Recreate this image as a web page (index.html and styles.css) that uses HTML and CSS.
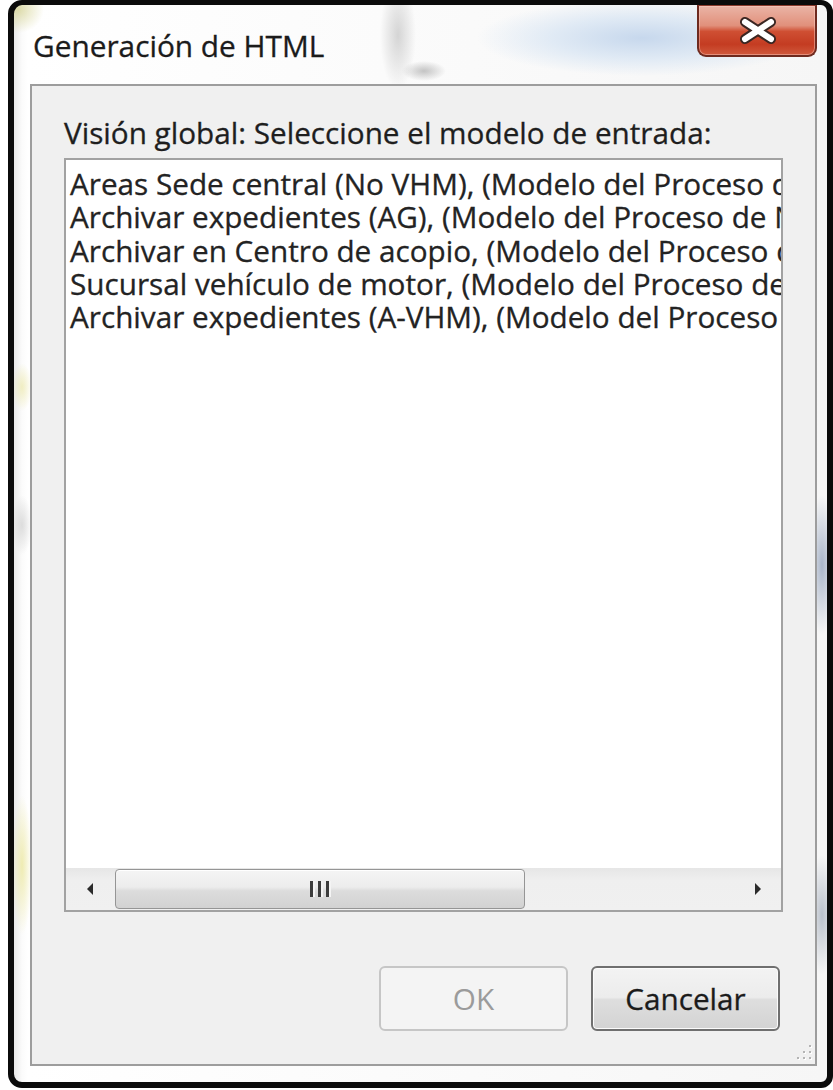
FILE: index.html
```html
<!DOCTYPE html>
<html lang="es">
<head>
<meta charset="utf-8">
<title>Generación de HTML</title>
<link rel="stylesheet" href="styles.css">
</head>
<body>
<div class="window">
  <div class="titlebar">
    <h1 class="title">Generación de HTML</h1>
    <button class="close" type="button" aria-label="Cerrar">
      <svg class="close-x" width="120" height="52" viewBox="0 0 120 52" aria-hidden="true">
        <path d="M48 17 L74 34 M74 17 L48 34" stroke="#3a2622" stroke-width="10" stroke-linecap="round" fill="none"/>
        <path d="M48 17 L74 34 M74 17 L48 34" stroke="#ffffff" stroke-width="6" stroke-linecap="round" fill="none"/>
      </svg>
    </button>
  </div>

  <div class="panel">
    <label class="prompt" for="models">Visión global: Seleccione el modelo de entrada:</label>
    <div class="listbox" id="models">
      <ul class="items">
        <li>Areas Sede central (No VHM), (Modelo del Proceso de Negocio)</li>
        <li>Archivar expedientes (AG), (Modelo del Proceso de Negocio)</li>
        <li>Archivar en Centro de acopio, (Modelo del Proceso de Negocio)</li>
        <li>Sucursal vehículo de motor, (Modelo del Proceso de Negocio)</li>
        <li>Archivar expedientes (A-VHM), (Modelo del Proceso de Negocio)</li>
      </ul>
      <div class="hscroll">
        <span class="arrow">
          <svg width="10" height="16" viewBox="0 0 10 16"><path d="M8 2 L2 8 L8 14 Z" fill="#2b2b2b"/></svg>
        </span>
        <div class="track">
          <div class="thumb">
            <svg class="grip" width="22" height="18" viewBox="0 0 22 18">
              <rect x="1" y="1" width="3" height="16" fill="#3c3c3c"/>
              <rect x="4" y="1" width="2" height="16" fill="#f4f4f4"/>
              <rect x="9" y="1" width="3" height="16" fill="#3c3c3c"/>
              <rect x="12" y="1" width="2" height="16" fill="#f4f4f4"/>
              <rect x="17" y="1" width="3" height="16" fill="#3c3c3c"/>
              <rect x="20" y="1" width="2" height="16" fill="#f4f4f4"/>
            </svg>
          </div>
        </div>
        <span class="arrow">
          <svg width="10" height="16" viewBox="0 0 10 16"><path d="M2 2 L8 8 L2 14 Z" fill="#2b2b2b"/></svg>
        </span>
      </div>
    </div>

    <div class="actions">
      <button class="btn" type="button" disabled>OK</button>
      <button class="btn btn-default" type="button">Cancelar</button>
    </div>

    <svg class="sizegrip" width="18" height="18" viewBox="0 0 18 18" aria-hidden="true">
      <g fill="#ffffff">
        <rect x="15" y="3" width="2" height="2"/>
        <rect x="15" y="9" width="2" height="2"/>
        <rect x="9" y="9" width="2" height="2"/>
        <rect x="15" y="15" width="2" height="2"/>
        <rect x="9" y="15" width="2" height="2"/>
        <rect x="3" y="15" width="2" height="2"/>
      </g>
      <g fill="#b4b4b4">
        <rect x="14" y="2" width="2" height="2"/>
        <rect x="14" y="8" width="2" height="2"/>
        <rect x="8" y="8" width="2" height="2"/>
        <rect x="14" y="14" width="2" height="2"/>
        <rect x="8" y="14" width="2" height="2"/>
        <rect x="2" y="14" width="2" height="2"/>
      </g>
    </svg>
  </div>
</div>
</body>
</html>
```

FILE: styles.css
```css
html, body {
  margin: 0;
  padding: 0;
  background: #ffffff;
  overflow: hidden;
}

body {
  width: 833px;
  height: 1090px;
  font-family: "Open Sans", "Noto Sans", "Liberation Sans", sans-serif;
}

/* Window frame: dark outline around a pale glass border */
.window {
  box-sizing: border-box;
  margin-left: 8px;
  width: 825px;
  height: 1088px;
  border: 6px solid #0b0b0b;
  border-top-width: 5px;
  border-radius: 14px 12px 12px 14px;
  display: flex;
  flex-direction: column;
  background:
    radial-gradient(ellipse 165px 38px at 628px 33px, rgba(196, 214, 236, 0.95), rgba(214, 228, 243, 0.7) 55%, rgba(255, 255, 255, 0) 100%),
    radial-gradient(ellipse 18px 55px at 384px 30px, rgba(196, 196, 196, 0.7), rgba(255, 255, 255, 0) 100%),
    radial-gradient(ellipse 22px 10px at 410px 66px, rgba(150, 150, 150, 0.55), rgba(255, 255, 255, 0) 100%),
    radial-gradient(ellipse 14px 70px at 808px 560px, rgba(150, 165, 190, 0.8), rgba(255, 255, 255, 0) 100%),
    radial-gradient(ellipse 14px 60px at 808px 910px, rgba(160, 170, 185, 0.7), rgba(255, 255, 255, 0) 100%),
    radial-gradient(ellipse 10px 70px at 8px 860px, rgba(236, 232, 160, 0.8), rgba(255, 255, 255, 0) 100%),
    radial-gradient(ellipse 10px 24px at 8px 382px, rgba(236, 232, 170, 0.7), rgba(255, 255, 255, 0) 100%),
    radial-gradient(ellipse 10px 30px at 8px 520px, rgba(200, 200, 200, 0.6), rgba(255, 255, 255, 0) 100%),
    radial-gradient(ellipse 26px 24px at 4px 4px, rgba(214, 212, 150, 0.8), rgba(255, 255, 255, 0) 100%),
    linear-gradient(90deg, #e9e9e9 0, #fbfbfb 8px, #ffffff 14px, #f6f6f6 100%);
}

.titlebar {
  height: 79px;
  flex: none;
  display: flex;
  justify-content: space-between;
  align-items: flex-start;
}

.title {
  margin: 21px 0 0 19px;
  font-size: 29.8px;
  line-height: 40px;
  font-weight: 400;
  color: #1b1b1b;
  -webkit-text-stroke: 0.3px #1b1b1b;
  text-shadow: 0 0 6px rgba(255, 255, 255, 0.9);
}

/* Red caption close button */
.close {
  position: relative;
  box-sizing: border-box;
  width: 120px;
  height: 52px;
  margin: 0 10px 0 0;
  padding: 0;
  border: 2px solid #6e2a1f;
  border-top: 1px solid #8a3a2c;
  border-radius: 0 0 9px 9px;
  background: linear-gradient(180deg, #eab4a6 0%, #e1907b 40%, #cf4f33 52%, #c43c22 78%, #d0593d 100%);
  box-shadow: inset 0 0 0 1px rgba(255, 210, 200, 0.45);
  cursor: default;
}

.close-x {
  position: absolute;
  left: -2px;
  top: -1px;
}

/* Client area */
.panel {
  position: relative;
  flex: 1;
  box-sizing: border-box;
  margin: 0 10px 16px 16px;
  border: 2px solid #9d9d9d;
  background: #f0f0f0;
  padding: 27px 32px 33px 32px;
  display: flex;
  flex-direction: column;
  color: #1e1e1e;
  font-size: 29.7px;
}

.prompt {
  display: block;
  line-height: 40px;
  margin-bottom: 5px;
  -webkit-text-stroke: 0.3px #1e1e1e;
}

.listbox {
  box-sizing: border-box;
  height: 754px;
  border: 2px solid #a2a2a2;
  background: #ffffff;
  display: flex;
  flex-direction: column;
  overflow: hidden;
}

.items {
  flex: 1;
  list-style: none;
  margin: 0;
  padding: 7px 0 0 4px;
  overflow: hidden;
}

.items li {
  white-space: nowrap;
  line-height: 33.3px;
  height: 33.3px;
  color: #232323;
  -webkit-text-stroke: 0.3px #232323;
}

/* Horizontal scroll bar */
.hscroll {
  height: 42px;
  flex: none;
  display: flex;
  background: linear-gradient(180deg, #e6e6e6 0%, #efefef 30%, #f0f0f0 100%);
}

.arrow {
  width: 47px;
  flex: none;
  display: flex;
  align-items: center;
  justify-content: center;
}

.track {
  flex: 1;
  padding: 1px 0;
  display: flex;
}

.thumb {
  box-sizing: border-box;
  width: 66%;
  margin-left: 2px;
  border: 1px solid #959595;
  border-radius: 4px;
  background: linear-gradient(180deg, #f5f5f5 0%, #ececec 45%, #dcdcdc 55%, #d2d2d2 100%);
  box-shadow: inset 0 1px 0 #ffffff;
  display: flex;
  align-items: center;
  justify-content: center;
}

/* Dialog buttons */
.actions {
  margin-top: auto;
  margin-right: 3px;
  display: flex;
  justify-content: flex-end;
  gap: 23px;
}

.btn {
  box-sizing: border-box;
  width: 189px;
  height: 65px;
  border: 2px solid #c6c6c6;
  border-radius: 6px;
  background: #f4f4f4;
  font-family: inherit;
  font-size: 29.7px;
  color: #9b9b9b;
  padding: 0;
  cursor: default;
}

.btn-default {
  border-color: #6f6f6f;
  color: #1b1b1b;
  -webkit-text-stroke: 0.3px #1b1b1b;
  background: linear-gradient(180deg, #f3f3f3 0%, #ececec 48%, #dedede 52%, #d3d3d3 100%);
  box-shadow: inset 0 0 0 1px #fbfbfb;
}

.sizegrip {
  position: absolute;
  right: 2px;
  bottom: 3px;
}
```
